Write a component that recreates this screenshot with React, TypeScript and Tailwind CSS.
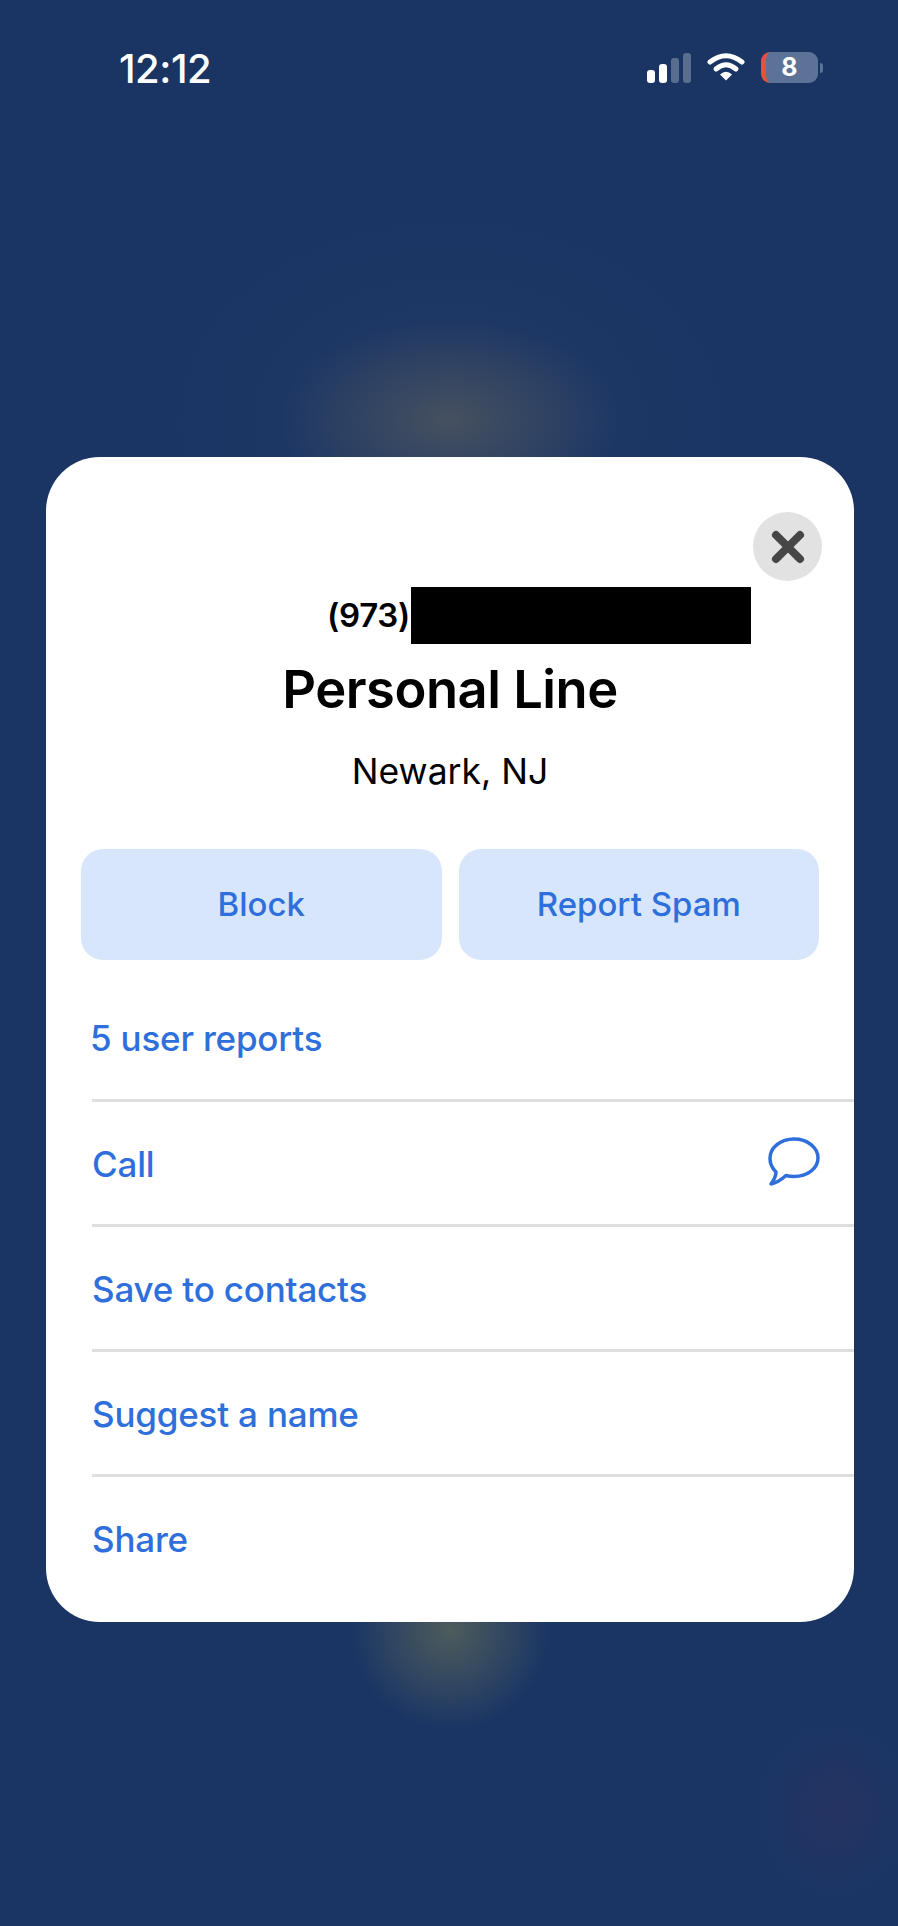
const ListRow = ({ label, icon, first }: { label: string; icon?: React.ReactNode; first?: boolean }) => (
  <div className={`ml-[46px] flex h-[125px] items-center justify-between pr-[34px] ${first ? "pt-[4px]" : "border-t-[3px] border-[#dedede] pt-[2px]"}`}>
    <span className={`text-[35px] font-medium leading-none tracking-[-0.2px] text-[#2f6fdc] ${first ? "-ml-[2px]" : ""}`}>{label}</span>
    {icon}
  </div>
);

const SignalBars = () => (
  <svg width="44" height="30" viewBox="0 0 44 30" fill="#ffffff">
    <rect x="0" y="17" width="8" height="13" rx="3" />
    <rect x="12" y="11" width="8" height="19" rx="3" />
    <rect x="24" y="5" width="8" height="25" rx="3" fillOpacity="0.28" />
    <rect x="36" y="0" width="8" height="30" rx="3" fillOpacity="0.28" />
  </svg>
);

const Wifi = () => (
  <svg width="38" height="29" viewBox="0 0 38 29" fill="none" stroke="#ffffff" strokeWidth="5" strokeLinecap="round" className="-mt-[2px]">
    <path d="M3 10Q19 -2.500 35 10" />
    <path d="M9 17Q19 8.500 29 17" />
    <path d="M13 22.500Q19 17 25 22.500L19 28.500Z" fill="#ffffff" stroke="none" />
  </svg>
);

const Battery = () => (
  <div className="flex items-center gap-[2px]">
    <div className="flex h-[31px] w-[57px] items-center justify-center overflow-hidden rounded-[9px] border-l-[5px] border-[#e8503a] bg-[#5c7296]">
      <span className="pr-[5px] text-[25px] font-bold leading-none text-white">8</span>
    </div>
    <div className="h-[10px] w-[3px] rounded-r-full bg-[#5c7296]" />
  </div>
);

const ChatBubble = () => (
  <svg width="52" height="50" viewBox="0 0 52 50" fill="none" stroke="#2f6fdc" strokeWidth="3.500" strokeLinejoin="round" className="-mt-[5px]">
    <path d="M8 35C4 31 2 26.500 2 21.500C2 10.500 12.500 2 26 2C39.500 2 50 10.500 50 21C50 31.500 39.500 39.500 26 39.500C23 39.500 20.500 39.200 18 38.500C13.500 42.500 8 46 3 47C6 43 8 39 8 35Z" />
  </svg>
);

export default function App() {
  return (
    <div className="h-[1926px] w-full overflow-hidden bg-[#1a3564] bg-[radial-gradient(ellipse_170px_100px_at_450px_420px,rgba(140,125,85,0.34),transparent),radial-gradient(ellipse_290px_210px_at_450px_420px,rgba(90,90,100,0.12),transparent),radial-gradient(ellipse_100px_100px_at_450px_1630px,rgba(150,145,80,0.42),transparent),radial-gradient(ellipse_80px_90px_at_835px_1810px,rgba(110,40,80,0.14),transparent)] font-['Inter',sans-serif]">
      {/* status bar */}
      <div className="flex h-[136px] items-start justify-between pl-[119px] pr-[75px] pt-[52px]">
        <span className="mt-[1px] text-[40px] font-medium leading-[32px] tracking-[-0.5px] text-white">12:12</span>
        <div className="flex items-center gap-[16px]">
          <SignalBars />
          <Wifi />
          <Battery />
        </div>
      </div>

      <div className="h-[321px]" />

      {/* call info card */}
      <div className="ml-[46px] mr-[44px] rounded-[54px] bg-white pb-[23px] pt-[55px]">
        <div className="flex justify-end pr-[32px]">
          <button className="flex h-[69px] w-[69px] items-center justify-center rounded-full bg-[#e2e2e2]">
            <svg width="34" height="34" viewBox="0 0 34 34" fill="none" stroke="#464646" strokeWidth="8" strokeLinecap="round">
              <path d="M5 5L29 29M29 5L5 29" />
            </svg>
          </button>
        </div>

        <div className="mt-[6px] flex h-[57px] items-center pl-[281px]">
          <span className="text-[33px] font-semibold leading-none tracking-[-0.3px] text-black">(973)</span>
          <div className="ml-[1px] h-[57px] w-[340px] bg-black" />
        </div>

        <h1 className="mt-[16px] text-center text-[52.5px] font-semibold leading-[58px] tracking-[-0.5px] text-black">Personal Line</h1>
        <p className="mt-[33px] text-center text-[35.5px] leading-[42px] text-black">Newark, NJ</p>

        <div className="mt-[56px] grid grid-cols-2 gap-[17px] px-[35px]">
          <button className="h-[111px] rounded-[22px] bg-[#d8e6fc] text-[33px] font-medium text-[#2f6fdc]">Block</button>
          <button className="h-[111px] rounded-[22px] bg-[#d8e6fc] text-[33px] font-medium text-[#2f6fdc]">Report Spam</button>
        </div>

        <div className="mt-[14px]">
          <ListRow label="5 user reports" first />
          <ListRow label="Call" icon={<ChatBubble />} />
          <ListRow label="Save to contacts" />
          <ListRow label="Suggest a name" />
          <ListRow label="Share" />
        </div>
      </div>
    </div>
  );
}
